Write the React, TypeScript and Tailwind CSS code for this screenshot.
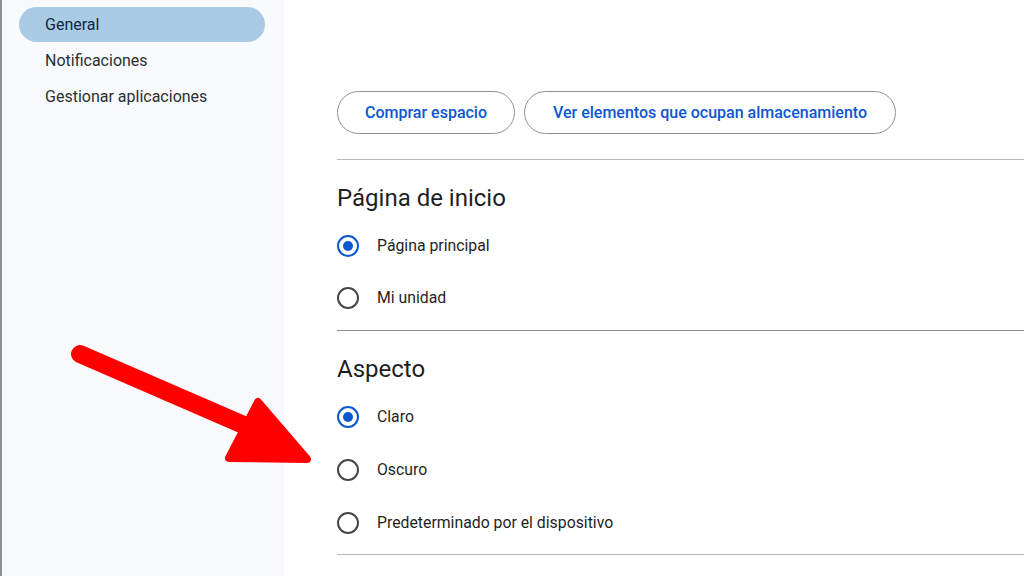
import React from 'react';

const font = { fontFamily: 'Roboto, "Open Sans", sans-serif' };

interface RadioProps {
    label: string;
    checked?: boolean;
    h: string;
}

const Radio: React.FC<RadioProps> = ({ label, checked, h }) => (
    <div className={`flex items-center ${h}`}>
        <div
            className={`w-[22px] h-[22px] rounded-full border-2 flex items-center justify-center ${
                checked ? 'border-[#0b57d0]' : 'border-[#444746]'
            }`}
        >
            {checked && <div className="w-[10px] h-[10px] rounded-full bg-[#0b57d0]" />}
        </div>
        <span className="ml-[18px] text-[15.8px] text-[#1f1f1f]">{label}</span>
    </div>
);

export default function App() {
    return (
        <div className="relative w-[1024px] h-[576px] overflow-hidden flex bg-white" style={font}>
            {/* sidebar */}
            <div className="w-[284px] shrink-0 border-l-2 border-[#8d8f93] bg-[#f8fafd] pt-[7px] pl-[17px]">
                <div className="w-[246px] h-[35px] rounded-full bg-[#a9cbe6] flex items-center pl-[26px] text-[16px] text-[#10273f]">
                    General
                </div>
                <div className="h-[36px] mt-[1px] flex items-center pl-[26px] text-[16px] text-[#2d2f31]">
                    Notificaciones
                </div>
                <div className="h-[35px] flex items-center pl-[26px] text-[16px] text-[#2d2f31]">
                    Gestionar aplicaciones
                </div>
            </div>

            {/* main */}
            <div className="flex-1 pl-[53px] pt-[91px]">
                <div className="flex gap-[9px]">
                    <button className="h-[43px] px-[27px] rounded-full border border-[#8e918f] text-[16px] font-medium text-[#0b57d0]">
                        Comprar espacio
                    </button>
                    <button className="h-[43px] px-[28px] rounded-full border border-[#8e918f] text-[16px] font-medium text-[#0b57d0]">
                        Ver elementos que ocupan almacenamiento
                    </button>
                </div>

                <div className="mt-[25px] border-t border-[#b8bab9]" />
                <div className="pt-[23px] h-[53px] text-[24px] leading-[30px] text-[#1f1f1f]">Página de inicio</div>
                <div className="mt-[7px]">
                    <Radio label="Página principal" checked h="h-[52px]" />
                    <Radio label="Mi unidad" h="h-[52px]" />
                </div>

                <div className="mt-[6px] border-t border-[#8e918f]" />
                <div className="pt-[23px] h-[53px] text-[24px] leading-[30px] text-[#1f1f1f]">Aspecto</div>
                <div className="mt-[6px]">
                    <Radio label="Claro" checked h="h-[53px]" />
                    <Radio label="Oscuro" h="h-[53px]" />
                    <Radio label="Predeterminado por el dispositivo" h="h-[53px]" />
                </div>
                <div className="mt-[5px] border-t border-[#b8bab9]" />
            </div>

            {/* annotation arrow */}
            <svg className="absolute left-0 top-0 pointer-events-none" width="1024" height="576" viewBox="0 0 1024 576">
                <line x1="80" y1="354" x2="262" y2="433" stroke="#ff0000" strokeWidth="18" strokeLinecap="round" />
                <polygon
                    points="258,402 229,458 307,459"
                    fill="#ff0000"
                    stroke="#ff0000"
                    strokeWidth="8"
                    strokeLinejoin="round"
                />
            </svg>
        </div>
    );
}
